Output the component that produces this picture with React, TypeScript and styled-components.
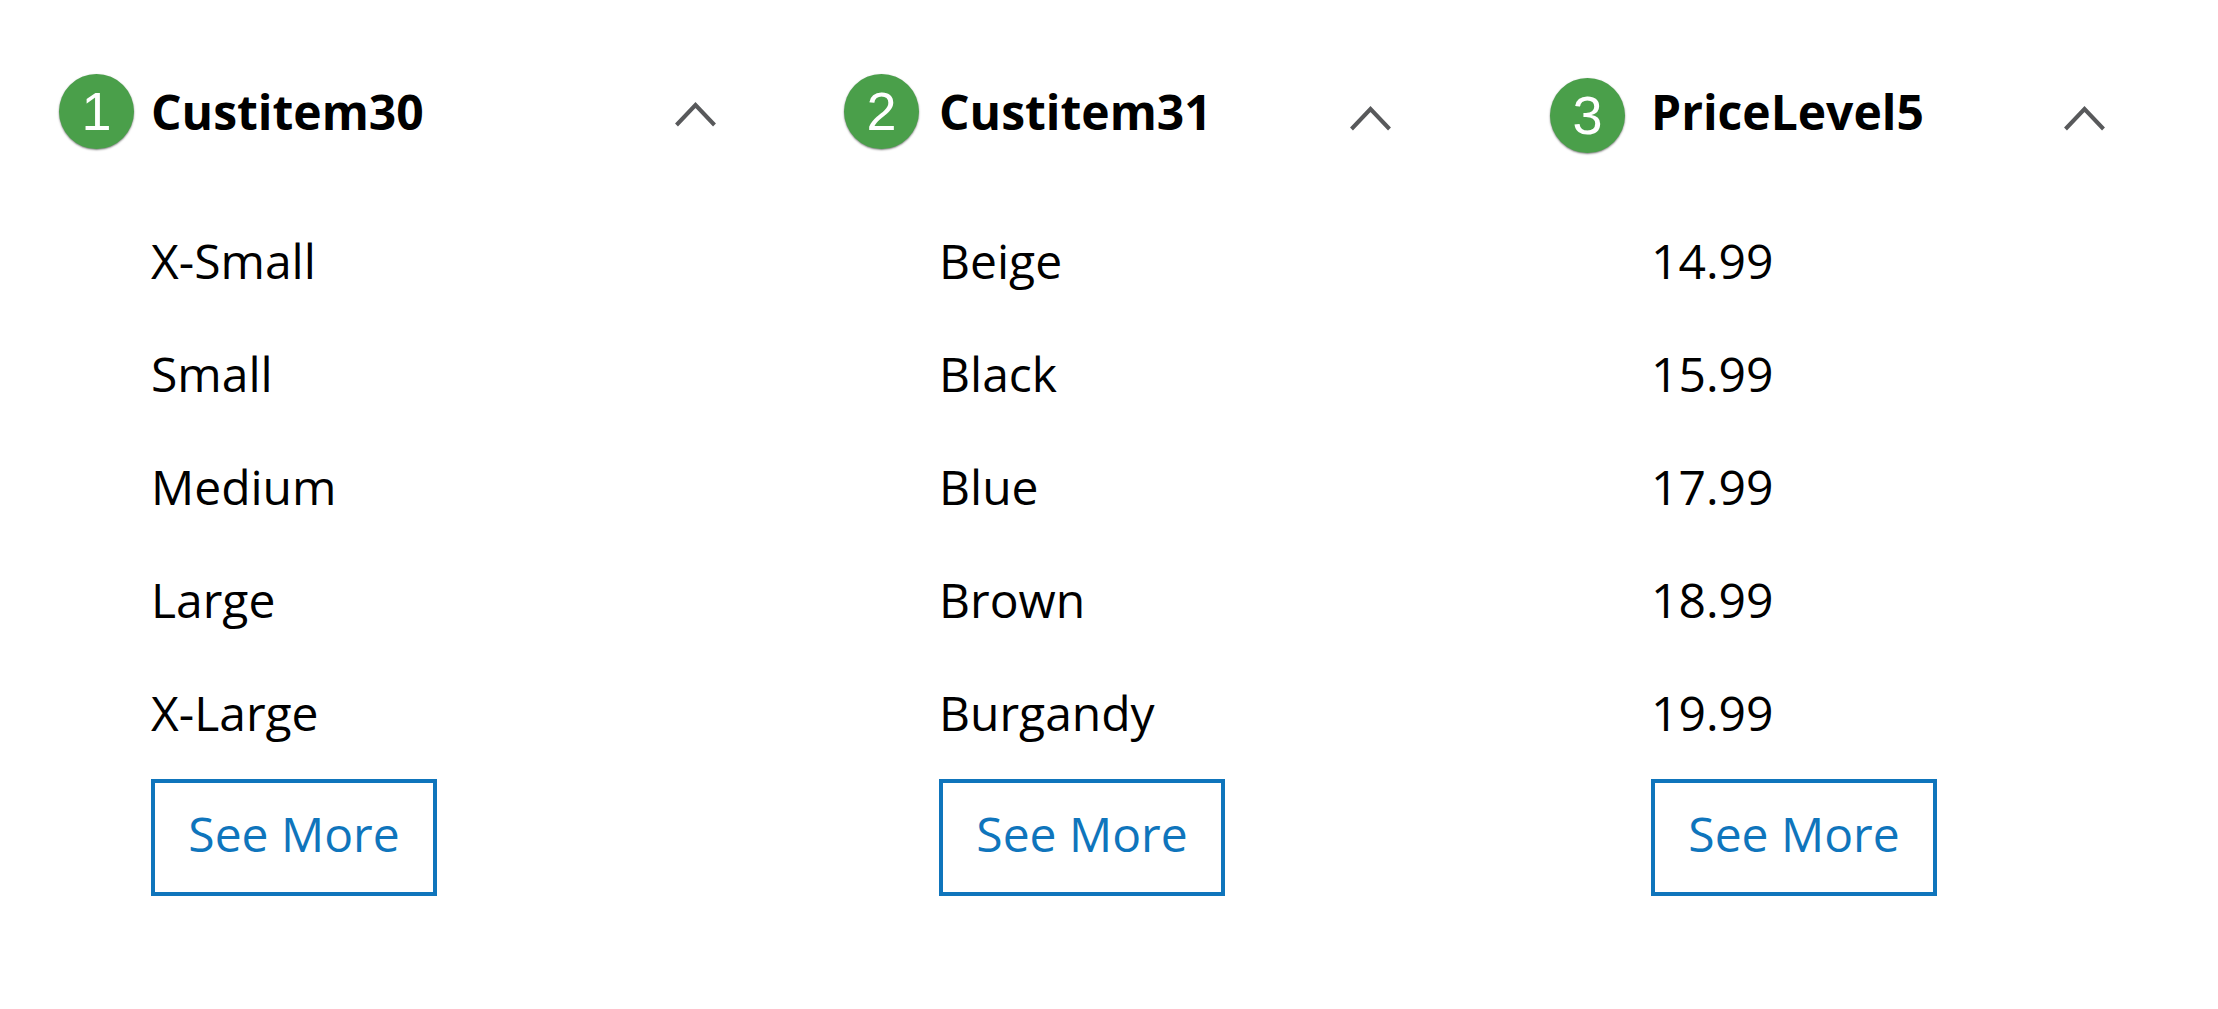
import React, { useState } from "react";
import styled, { createGlobalStyle } from "styled-components";

const GlobalStyle = createGlobalStyle`
  *, *::before, *::after { box-sizing: border-box; }
  body {
    margin: 0;
    background: #ffffff;
    color: #000000;
    font-family: "Open Sans", "Noto Sans", sans-serif;
    font-size: 48px;
  }
`;

const Page = styled.main`
  display: grid;
  grid-template-columns: 785fr 706fr 555fr;
  padding: 74px 113px 112px 59px;
`;

const Facet = styled.section<{ $indent: number; $end: number }>`
  display: grid;
  grid-template-columns: ${(p) => p.$indent}px minmax(0, 1fr);
  align-content: start;
  padding-right: ${(p) => p.$end}px;
`;

const Badge = styled.span<{ $low: boolean }>`
  display: flex;
  align-items: center;
  justify-content: center;
  width: 75px;
  height: 75px;
  margin-top: ${(p) => (p.$low ? 4 : 0)}px;
  border-radius: 50%;
  background: #4a9f4a;
  color: #ffffff;
  box-shadow: 0 1px 2px rgba(0, 0, 0, 0.5);
  font-family: "Liberation Sans", Arial, sans-serif;
  font-size: 54px;
  line-height: 75px;
`;

const Header = styled.header`
  display: flex;
  align-items: flex-start;
  justify-content: space-between;
  height: 80px;
`;

const Title = styled.h2`
  margin: 0;
  font-size: 48px;
  font-weight: 700;
  line-height: 75px;
`;

const Toggle = styled.button<{ $low: boolean; $open: boolean }>`
  display: flex;
  align-items: center;
  height: 80px;
  margin: ${(p) => (p.$low ? 4 : 0)}px 0 0;
  padding: 0;
  border: 0;
  background: none;
  color: #58595b;
  cursor: pointer;

  svg {
    display: block;
    transform: ${(p) => (p.$open ? "none" : "rotate(180deg)")};
  }
`;

const Body = styled.div`
  grid-column: 2;
  padding-top: 50px;
`;

const Values = styled.ul`
  margin: 0 0 10px;
  padding: 0;
  list-style: none;
`;

const Value = styled.li`
  line-height: 113px;
`;

const ValueLink = styled.a`
  color: inherit;
  text-decoration: none;
`;

const SeeMore = styled.button`
  display: block;
  min-width: 286px;
  padding: 0 24px 8px;
  border: 4px solid #0f75bc;
  background: #ffffff;
  color: #0f75bc;
  font-family: inherit;
  font-size: 48px;
  line-height: 101px;
  cursor: pointer;
`;

type FacetData = {
  title: string;
  values: string[];
  indent: number;
  end: number;
  lowBadge: boolean;
  lowToggle: boolean;
};

const facets: FacetData[] = [
  {
    title: "Custitem30",
    values: ["X-Small", "Small", "Medium", "Large", "X-Large"],
    indent: 92,
    end: 128,
    lowBadge: false,
    lowToggle: false,
  },
  {
    title: "Custitem31",
    values: ["Beige", "Black", "Blue", "Brown", "Burgandy"],
    indent: 95,
    end: 159,
    lowBadge: false,
    lowToggle: true,
  },
  {
    title: "PriceLevel5",
    values: ["14.99", "15.99", "17.99", "18.99", "19.99"],
    indent: 101,
    end: 0,
    lowBadge: true,
    lowToggle: true,
  },
];

function FacetColumn({ facet, index }: { facet: FacetData; index: number }) {
  const [open, setOpen] = useState(true);
  return (
    <Facet $indent={facet.indent} $end={facet.end}>
      <Badge $low={facet.lowBadge}>{index}</Badge>
      <Header>
        <Title>{facet.title}</Title>
        <Toggle
          type="button"
          $low={facet.lowToggle}
          $open={open}
          aria-expanded={open}
          aria-label={`Toggle ${facet.title}`}
          onClick={() => setOpen(!open)}
        >
          <svg width="41" height="26" viewBox="0 0 41 26" fill="none" aria-hidden="true">
            <path d="M1.5 24 L20.5 4 L39.5 24" stroke="currentColor" strokeWidth="4" />
          </svg>
        </Toggle>
      </Header>
      {open && (
        <Body>
          <Values>
            {facet.values.map((value) => (
              <Value key={value}>
                <ValueLink href={`#${value}`}>{value}</ValueLink>
              </Value>
            ))}
          </Values>
          <SeeMore type="button">See More</SeeMore>
        </Body>
      )}
    </Facet>
  );
}

export default function App() {
  return (
    <>
      <GlobalStyle />
      <Page>
        {facets.map((facet, i) => (
          <FacetColumn key={facet.title} facet={facet} index={i + 1} />
        ))}
      </Page>
    </>
  );
}
